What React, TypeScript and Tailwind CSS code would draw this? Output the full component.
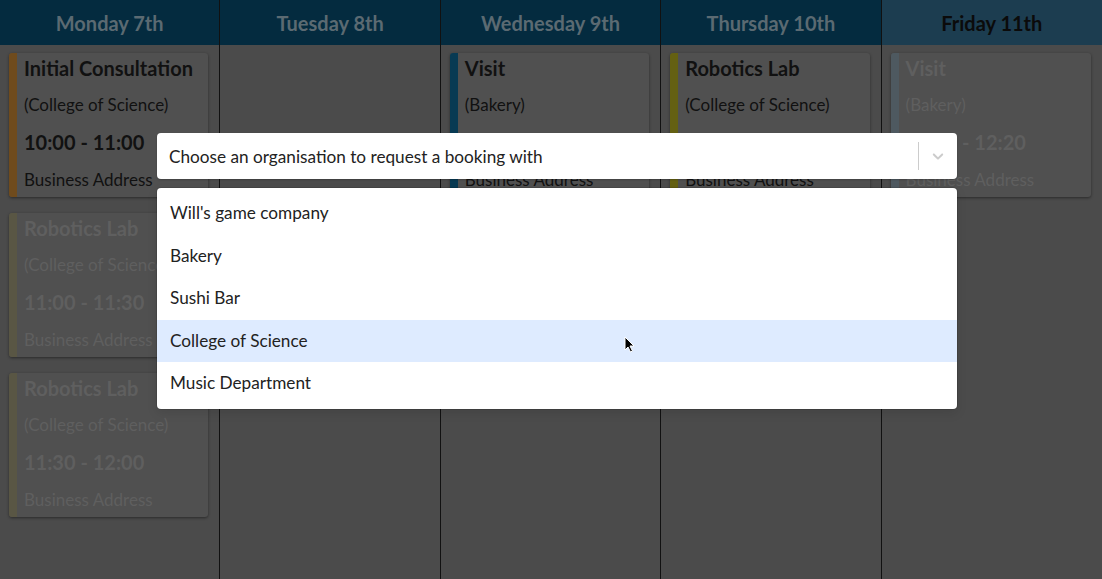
import React from "react";

type Booking = {
    title: string;
    org: string;
    time: string;
    stripe: string;
    faded?: boolean;
};

type Day = {
    label: string;
    today?: boolean;
    bookings: Booking[];
};

const days: Day[] = [
    {
        label: "Monday 7th",
        bookings: [
            { title: "Initial Consultation", org: "(College of Science)", time: "10:00 - 11:00", stripe: "bg-[#6f4b1d]" },
            { title: "Robotics Lab", org: "(College of Science)", time: "11:00 - 11:30", stripe: "bg-[#595644]", faded: true },
            { title: "Robotics Lab", org: "(College of Science)", time: "11:30 - 12:00", stripe: "bg-[#595644]", faded: true },
        ],
    },
    { label: "Tuesday 8th", bookings: [] },
    {
        label: "Wednesday 9th",
        bookings: [{ title: "Visit", org: "(Bakery)", time: "11:00 - 12:00", stripe: "bg-[#083a53]" }],
    },
    {
        label: "Thursday 10th",
        bookings: [{ title: "Robotics Lab", org: "(College of Science)", time: "10:00 - 11:00", stripe: "bg-[#646012]" }],
    },
    {
        label: "Friday 11th",
        today: true,
        bookings: [{ title: "Visit", org: "(Bakery)", time: "12:00 - 12:20", stripe: "bg-[#4e5960]", faded: true }],
    },
];

const organisations = ["Will's game company", "Bakery", "Sushi Bar", "College of Science", "Music Department"];

function BookingCard({ booking }: { booking: Booking }) {
    const text = booking.faded ? "text-[#5f5f5f]" : "text-[#111111]";
    return (
        <div className="ml-[9px] mr-[11px] mb-[16px] h-[144px] flex rounded-[3px] bg-[#505050] shadow-[0_1px_3px_rgba(0,0,0,0.45)] overflow-hidden">
            <div className={`w-[8px] shrink-0 ${booking.stripe}`} />
            <div className={`pl-[7px] flex-1 min-w-0 whitespace-nowrap ${text}`}>
                <p className="text-[20px] font-bold leading-[30px]">{booking.title}</p>
                <p className="text-[17px] leading-[30px] mt-[7px]">{booking.org}</p>
                <p className="text-[20px] font-bold leading-[30px] mt-[7px]">{booking.time}</p>
                <p className="text-[17px] leading-[30px] mt-[8px]">Business Address</p>
            </div>
        </div>
    );
}

export default function App() {
    return (
        <div className="relative w-[1102px] h-[579px] overflow-hidden bg-[#4b4b4b] font-['Lato','Liberation_Sans',sans-serif]">
            <div className="grid grid-cols-5 h-full">
                {days.map((day, i) => (
                    <div key={day.label} className={`flex flex-col ${i < 4 ? "border-r border-[#111111]" : ""}`}>
                        <div
                            className={`h-[45px] shrink-0 flex items-center justify-center text-[20px] font-bold ${
                                day.today ? "bg-[#1c3d50] text-[#0b0b0b]" : "bg-[#042b3f] text-[#5b6a72]"
                            }`}
                        >
                            {day.label}
                        </div>
                        <div className="pt-[8px] flex-1">
                            {day.bookings.map((b, j) => (
                                <BookingCard key={j} booking={b} />
                            ))}
                        </div>
                    </div>
                ))}
            </div>

            {/* organisation select */}
            <div className="absolute left-[157px] top-[133px] w-[800px]">
                <div className="h-[46px] flex items-center bg-white rounded-[4px] shadow-[0_1px_2px_rgba(0,0,0,0.2)]">
                    <span className="flex-1 pl-[12px] pt-[2px] text-[17.2px] text-[#222222]">
                        Choose an organisation to request a booking with
                    </span>
                    <span className="w-px h-[28px] bg-[#cccccc]" />
                    <span className="w-[38px] flex justify-center text-[#cccccc]">
                        <svg width="18" height="18" viewBox="0 0 20 20" fill="currentColor">
                            <path d="M4.516 7.548c0.436-0.446 1.043-0.481 1.576 0l3.908 3.747 3.908-3.747c0.533-0.481 1.141-0.446 1.574 0 0.436 0.445 0.408 1.197 0 1.615-0.406 0.418-4.695 4.502-4.695 4.502-0.217 0.223-0.502 0.335-0.787 0.335s-0.57-0.112-0.789-0.335c0 0-4.287-4.084-4.695-4.502s-0.436-1.17 0-1.615z" />
                        </svg>
                    </span>
                </div>
                <div className="mt-[9px] bg-white rounded-[4px] py-[4px] shadow-[0_0_0_1px_rgba(0,0,0,0.1),0_4px_11px_rgba(0,0,0,0.1)]">
                    {organisations.map((org) => (
                        <div
                            key={org}
                            className={`h-[42.5px] flex items-center pl-[13px] text-[17.2px] text-[#222222] ${
                                org === "College of Science" ? "bg-[#deebff]" : ""
                            }`}
                        >
                            {org}
                        </div>
                    ))}
                </div>
            </div>

            {/* mouse pointer */}
            <svg className="absolute left-[624px] top-[336px]" width="11" height="17" viewBox="0 0 11 17">
                <path d="M1 1 L1 14 L4 11 L6.5 16 L8.5 15 L6 10 L10 10 Z" fill="#000" stroke="#fff" strokeWidth="1" />
            </svg>
        </div>
    );
}
